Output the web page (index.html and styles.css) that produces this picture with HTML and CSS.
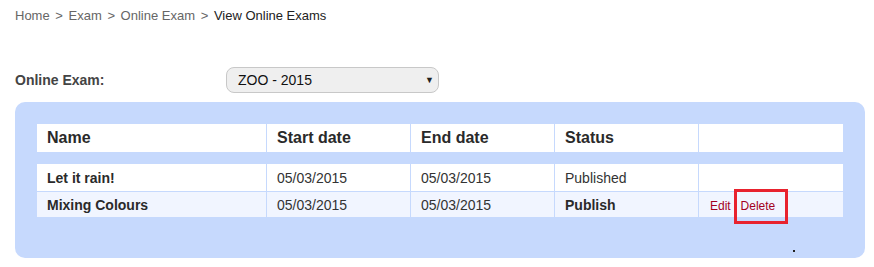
FILE: index.html
```html
<!DOCTYPE html>
<html lang="en">
<head>
    <meta charset="UTF-8">
    <meta name="viewport" content="width=device-width, initial-scale=1.0">
    <title>View Online Exams</title>
    <link rel="stylesheet" href="styles.css">
</head>
<body>
    <div class="page">
        <div class="breadcrumb">
            <a href="#">Home</a> <span class="sep">&gt;</span> <a href="#">Exam</a> <span class="sep">&gt;</span> <a href="#">Online Exam</a> <span class="sep">&gt;</span> <span class="current">View Online Exams</span>
        </div>

        <div class="filter-row">
            <label class="filter-label" for="exam-select">Online Exam:</label>
            <div class="select-box" id="exam-select">
                <span>ZOO - 2015</span>
                <span class="select-arrow">&#9660;</span>
            </div>
        </div>

        <div class="panel">
            <table class="exam-table">
                <colgroup>
                    <col class="col-name">
                    <col class="col-date">
                    <col class="col-date">
                    <col class="col-status">
                    <col>
                </colgroup>
                <thead>
                    <tr>
                        <th>Name</th>
                        <th>Start date</th>
                        <th>End date</th>
                        <th>Status</th>
                        <th></th>
                    </tr>
                </thead>
                <tbody>
                    <tr>
                        <td class="name">Let it rain!</td>
                        <td>05/03/2015</td>
                        <td>05/03/2015</td>
                        <td>Published</td>
                        <td></td>
                    </tr>
                    <tr class="alt">
                        <td class="name">Mixing Colours</td>
                        <td>05/03/2015</td>
                        <td>05/03/2015</td>
                        <td class="status-action">Publish</td>
                        <td class="actions">
                            <a href="#">Edit</a>
                            <a href="#">Delete</a>
                            <span class="highlight"></span>
                        </td>
                    </tr>
                </tbody>
            </table>
            <span class="dot"></span>
        </div>
    </div>
</body>
</html>
```

FILE: styles.css
```css
body {
    margin: 0;
    background-color: #fff;
    font-family: "Liberation Sans", Arial, sans-serif;
    color: #222;
}

.page {
    width: 850px;
    padding: 8px 0 0 15px;
}

.breadcrumb {
    font-size: 13px;
    line-height: 16px;
    color: #666;
}

.breadcrumb a {
    color: #666;
    text-decoration: none;
}

.breadcrumb .sep {
    padding: 0 2px;
}

.breadcrumb .current {
    color: #222;
}

.filter-row {
    display: flex;
    align-items: center;
    margin-top: 43px;
}

.filter-label {
    width: 211px;
    font-size: 14px;
    font-weight: bold;
    color: #444;
}

.select-box {
    display: flex;
    align-items: center;
    justify-content: space-between;
    box-sizing: border-box;
    width: 213px;
    height: 26px;
    padding: 0 4px 0 11px;
    border: 1px solid #c8c8c8;
    border-radius: 8px;
    background-color: #efefef;
    font-size: 14px;
    color: #111;
}

.select-arrow {
    font-size: 9px;
    color: #222;
}

.panel {
    position: relative;
    margin-top: 9px;
    padding: 21px 21px 40px;
    border-radius: 10px;
    background-color: #c6d9fd;
}

.exam-table {
    width: 100%;
    border-collapse: collapse;
}

.col-name {
    width: 230px;
}

.col-date,
.col-status {
    width: 144px;
}

.exam-table th,
.exam-table td {
    border: 1px solid #c6d9fd;
    padding: 0 10px;
    text-align: left;
    background-color: #fff;
}

.exam-table th {
    height: 28px;
    border-bottom-width: 12px;
    font-size: 16px;
    color: #2a2a2a;
}

.exam-table td {
    height: 27px;
    font-size: 14px;
    color: #333;
}

.exam-table tr.alt td {
    height: 25px;
    background-color: #f1f5ff;
}

.exam-table td.name,
.exam-table td.status-action {
    font-weight: bold;
    color: #2a2a2a;
}

.exam-table td.actions {
    position: relative;
    padding-left: 11px;
}

.actions a {
    font-size: 12px;
    color: #a3001e;
    text-decoration: none;
}

.actions a + a {
    margin-left: 6px;
}

.highlight {
    position: absolute;
    left: 35px;
    top: -3px;
    width: 48px;
    height: 29px;
    border: 3px solid #e8222e;
}

.dot {
    position: absolute;
    left: 778px;
    top: 148px;
    width: 2px;
    height: 2px;
    background-color: #222;
}
```
